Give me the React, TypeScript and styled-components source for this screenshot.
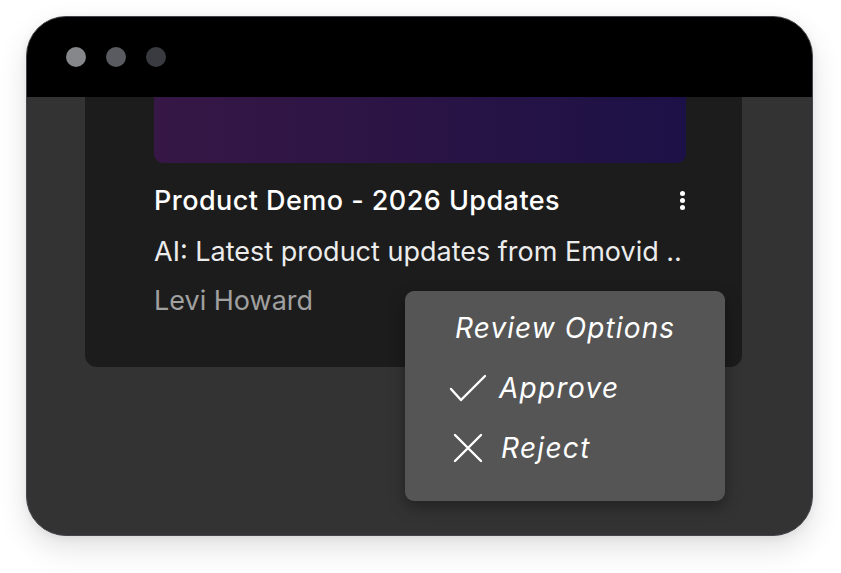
import React from "react";
import styled, { createGlobalStyle } from "styled-components";

const GlobalStyle = createGlobalStyle`
  html, body {
    margin: 0;
    padding: 0;
    background: #ffffff;
  }
  * {
    box-sizing: border-box;
  }
`;

const Stage = styled.div`
  width: 841px;
  height: 573px;
  padding: 16px 28px 37px 26px;
  font-family: "Inter", "Noto Sans", sans-serif;
`;

const Window = styled.div`
  position: relative;
  width: 787px;
  height: 520px;
  border-radius: 40px;
  border: 1.5px solid #44464c;
  background: #333333;
  overflow: hidden;
  box-shadow: 0 12px 30px rgba(0, 0, 0, 0.12), 0 2px 8px rgba(0, 0, 0, 0.06);
  display: flex;
  flex-direction: column;
`;

const TitleBar = styled.div`
  height: 80px;
  flex-shrink: 0;
  background: #000000;
  display: flex;
  align-items: center;
  gap: 20px;
  padding-left: 39px;
`;

const Dot = styled.span<{ $tone: string }>`
  width: 20px;
  height: 20px;
  border-radius: 50%;
  background: ${(p) => p.$tone};
`;

const Body = styled.div`
  flex: 1;
  padding: 0 70px 0 58px;
`;

const Card = styled.div`
  background: #1c1c1c;
  border-radius: 0 0 12px 12px;
  padding: 0 56px 0 69px;
  height: 270px;
`;

const Thumb = styled.div`
  height: 66px;
  border-radius: 0 0 9px 9px;
  background: linear-gradient(90deg, #361745 0%, #2a1445 50%, #1c1147 100%);
`;

const TitleRow = styled.div`
  display: flex;
  align-items: center;
  justify-content: space-between;
  margin-top: 20px;
  height: 34px;
`;

const Title = styled.div`
  color: #ffffff;
  font-size: 27px;
  font-weight: 500;
  letter-spacing: 0.45px;
`;

const Kebab = styled.div`
  display: flex;
  flex-direction: column;
  gap: 2px;
  margin-right: 1px;
  span {
    width: 5px;
    height: 5px;
    border-radius: 50%;
    background: #ffffff;
  }
`;

const Line = styled.div<{ $muted?: boolean; $gap: number }>`
  color: ${(p) => (p.$muted ? "#a0a0a0" : "#ececec")};
  font-size: 27px;
  font-weight: 400;
  height: 34px;
  line-height: 34px;
  margin-top: ${(p) => p.$gap}px;
  white-space: nowrap;
`;

const Menu = styled.div`
  position: absolute;
  left: 378px;
  top: 274px;
  width: 320px;
  height: 210px;
  background: #555555;
  border-radius: 9px;
  box-shadow: 0 6px 16px rgba(0, 0, 0, 0.35);
  padding: 20px 0 0 44px;
  display: flex;
  flex-direction: column;
`;

const MenuHeading = styled.div`
  color: #ffffff;
  font-size: 28px;
  font-style: italic;
  letter-spacing: 1.1px;
  height: 34px;
  line-height: 34px;
  padding-left: 6px;
`;

const MenuItem = styled.div`
  display: flex;
  align-items: center;
  gap: 12px;
  height: 34px;
  margin-top: 26px;
  color: #ffffff;
  font-size: 28px;
  font-style: italic;
  letter-spacing: 1.3px;
`;

const IconBox = styled.svg`
  flex-shrink: 0;
`;

function CheckIcon() {
  return (
    <IconBox width="38" height="34" viewBox="0 0 38 34" fill="none">
      <path d="M2 18 L12 29 L36 5" stroke="#fff" strokeWidth="2.4" strokeLinecap="round" strokeLinejoin="round" />
    </IconBox>
  );
}

function CrossIcon() {
  return (
    <IconBox width="38" height="34" viewBox="0 0 38 34" fill="none" style={{ marginRight: 2 }}>
      <path d="M6 4 L32 30 M32 4 L6 30" stroke="#fff" strokeWidth="2.4" strokeLinecap="round" />
    </IconBox>
  );
}

export default function App() {
  return (
    <>
      <GlobalStyle />
      <Stage>
        <Window>
          <TitleBar>
            <Dot $tone="#86878b" />
            <Dot $tone="#595b60" />
            <Dot $tone="#393b41" />
          </TitleBar>
          <Body>
            <Card>
              <Thumb />
              <TitleRow>
                <Title>Product Demo - 2026 Updates</Title>
                <Kebab>
                  <span />
                  <span />
                  <span />
                </Kebab>
              </TitleRow>
              <Line $gap={18}>AI: Latest product updates from Emovid ..</Line>
              <Line $gap={15} $muted>
                Levi Howard
              </Line>
            </Card>
          </Body>
          <Menu>
            <MenuHeading>Review Options</MenuHeading>
            <MenuItem>
              <CheckIcon />
              Approve
            </MenuItem>
            <MenuItem>
              <CrossIcon />
              Reject
            </MenuItem>
          </Menu>
        </Window>
      </Stage>
    </>
  );
}
